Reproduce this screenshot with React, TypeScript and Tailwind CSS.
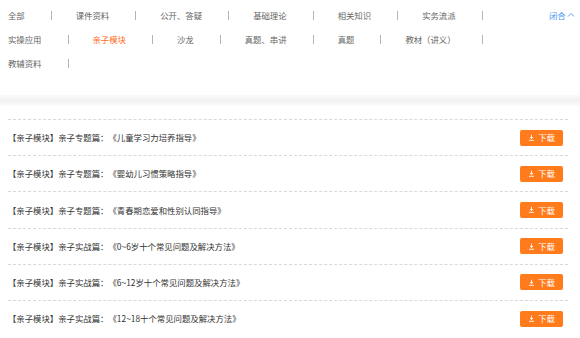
import React from "react";

const rows1 = ["全部", "课件资料", "公开、答疑", "基础理论", "相关知识", "实务流派", "实操应用", "亲子模块", "沙龙", "真题、串讲", "真题", "教材（讲义）", "教辅资料"];

const items = [
  "【亲子模块】亲子专题篇：《儿童学习力培养指导》",
  "【亲子模块】亲子专题篇：《婴幼儿习惯策略指导》",
  "【亲子模块】亲子专题篇：《青春期恋爱和性别认同指导》",
  "【亲子模块】亲子实战篇：《0~6岁十个常见问题及解决方法》",
  "【亲子模块】亲子实战篇：《6~12岁十个常见问题及解决方法》",
  "【亲子模块】亲子实战篇：《12~18十个常见问题及解决方法》",
];

function DownloadIcon() {
  return (
    <svg width="7" height="7" viewBox="0 0 10 10" className="mr-[3px]">
      <path d="M5 1 V6.5 M2.8 4.4 L5 6.6 L7.2 4.4" stroke="white" strokeWidth="1.3" fill="none" />
      <path d="M1.5 9 H8.5" stroke="white" strokeWidth="1.3" />
    </svg>
  );
}

export default function App() {
  return (
    <div
      className="w-[580px] h-[338px] bg-white overflow-hidden [text-spacing-trim:space-all]"
      style={{ fontFamily: '"Noto Sans CJK SC", "Noto Sans", sans-serif' }}
    >
      <div className="flex pl-[8px] pt-[3px]">
        <div className="w-[532px] flex flex-wrap">
          {rows1.map((t) => (
            <div key={t} className="flex items-center h-[24px]">
              <span
                className={`text-[8.4px] leading-[24px] whitespace-nowrap ${
                  t === "亲子模块" ? "text-[#ff6a1a]" : "text-[#666666]"
                }`}
              >
                {t}
              </span>
              <span className="ml-[26px] mr-[24px] w-[1px] h-[9px] bg-[#b4b4b4]" />
            </div>
          ))}
        </div>
        <div className="flex items-center h-[24px] ml-[9px] text-[8.4px] text-[#4a97f5] whitespace-nowrap">
          闭合
          <svg width="8" height="6" viewBox="0 0 8 6" className="ml-[1px]">
            <path d="M1 4.5 L4 1.5 L7 4.5" stroke="#4a97f5" strokeWidth="0.9" fill="none" />
          </svg>
        </div>
      </div>

      <div className="mt-[20px] h-[11px] bg-gradient-to-b from-[#fbfbfb] via-[#f2f2f2] to-[#fbfbfb]" />

      <div className="mt-[13px] pl-[8px] pr-[12px]">
        {items.map((t) => (
          <div
            key={t}
            className="h-[36.2px] border-t border-dashed border-[#d9d9d9] flex items-center justify-between"
          >
            <span className="text-[8.4px] text-[#333333] whitespace-nowrap">{t}</span>
            <button className="mr-[5px] w-[43px] h-[16px] rounded-[2px] bg-[#ff7b1c] text-white text-[8.4px] flex items-center justify-center">
              <DownloadIcon />
              下载
            </button>
          </div>
        ))}
      </div>
    </div>
  );
}
